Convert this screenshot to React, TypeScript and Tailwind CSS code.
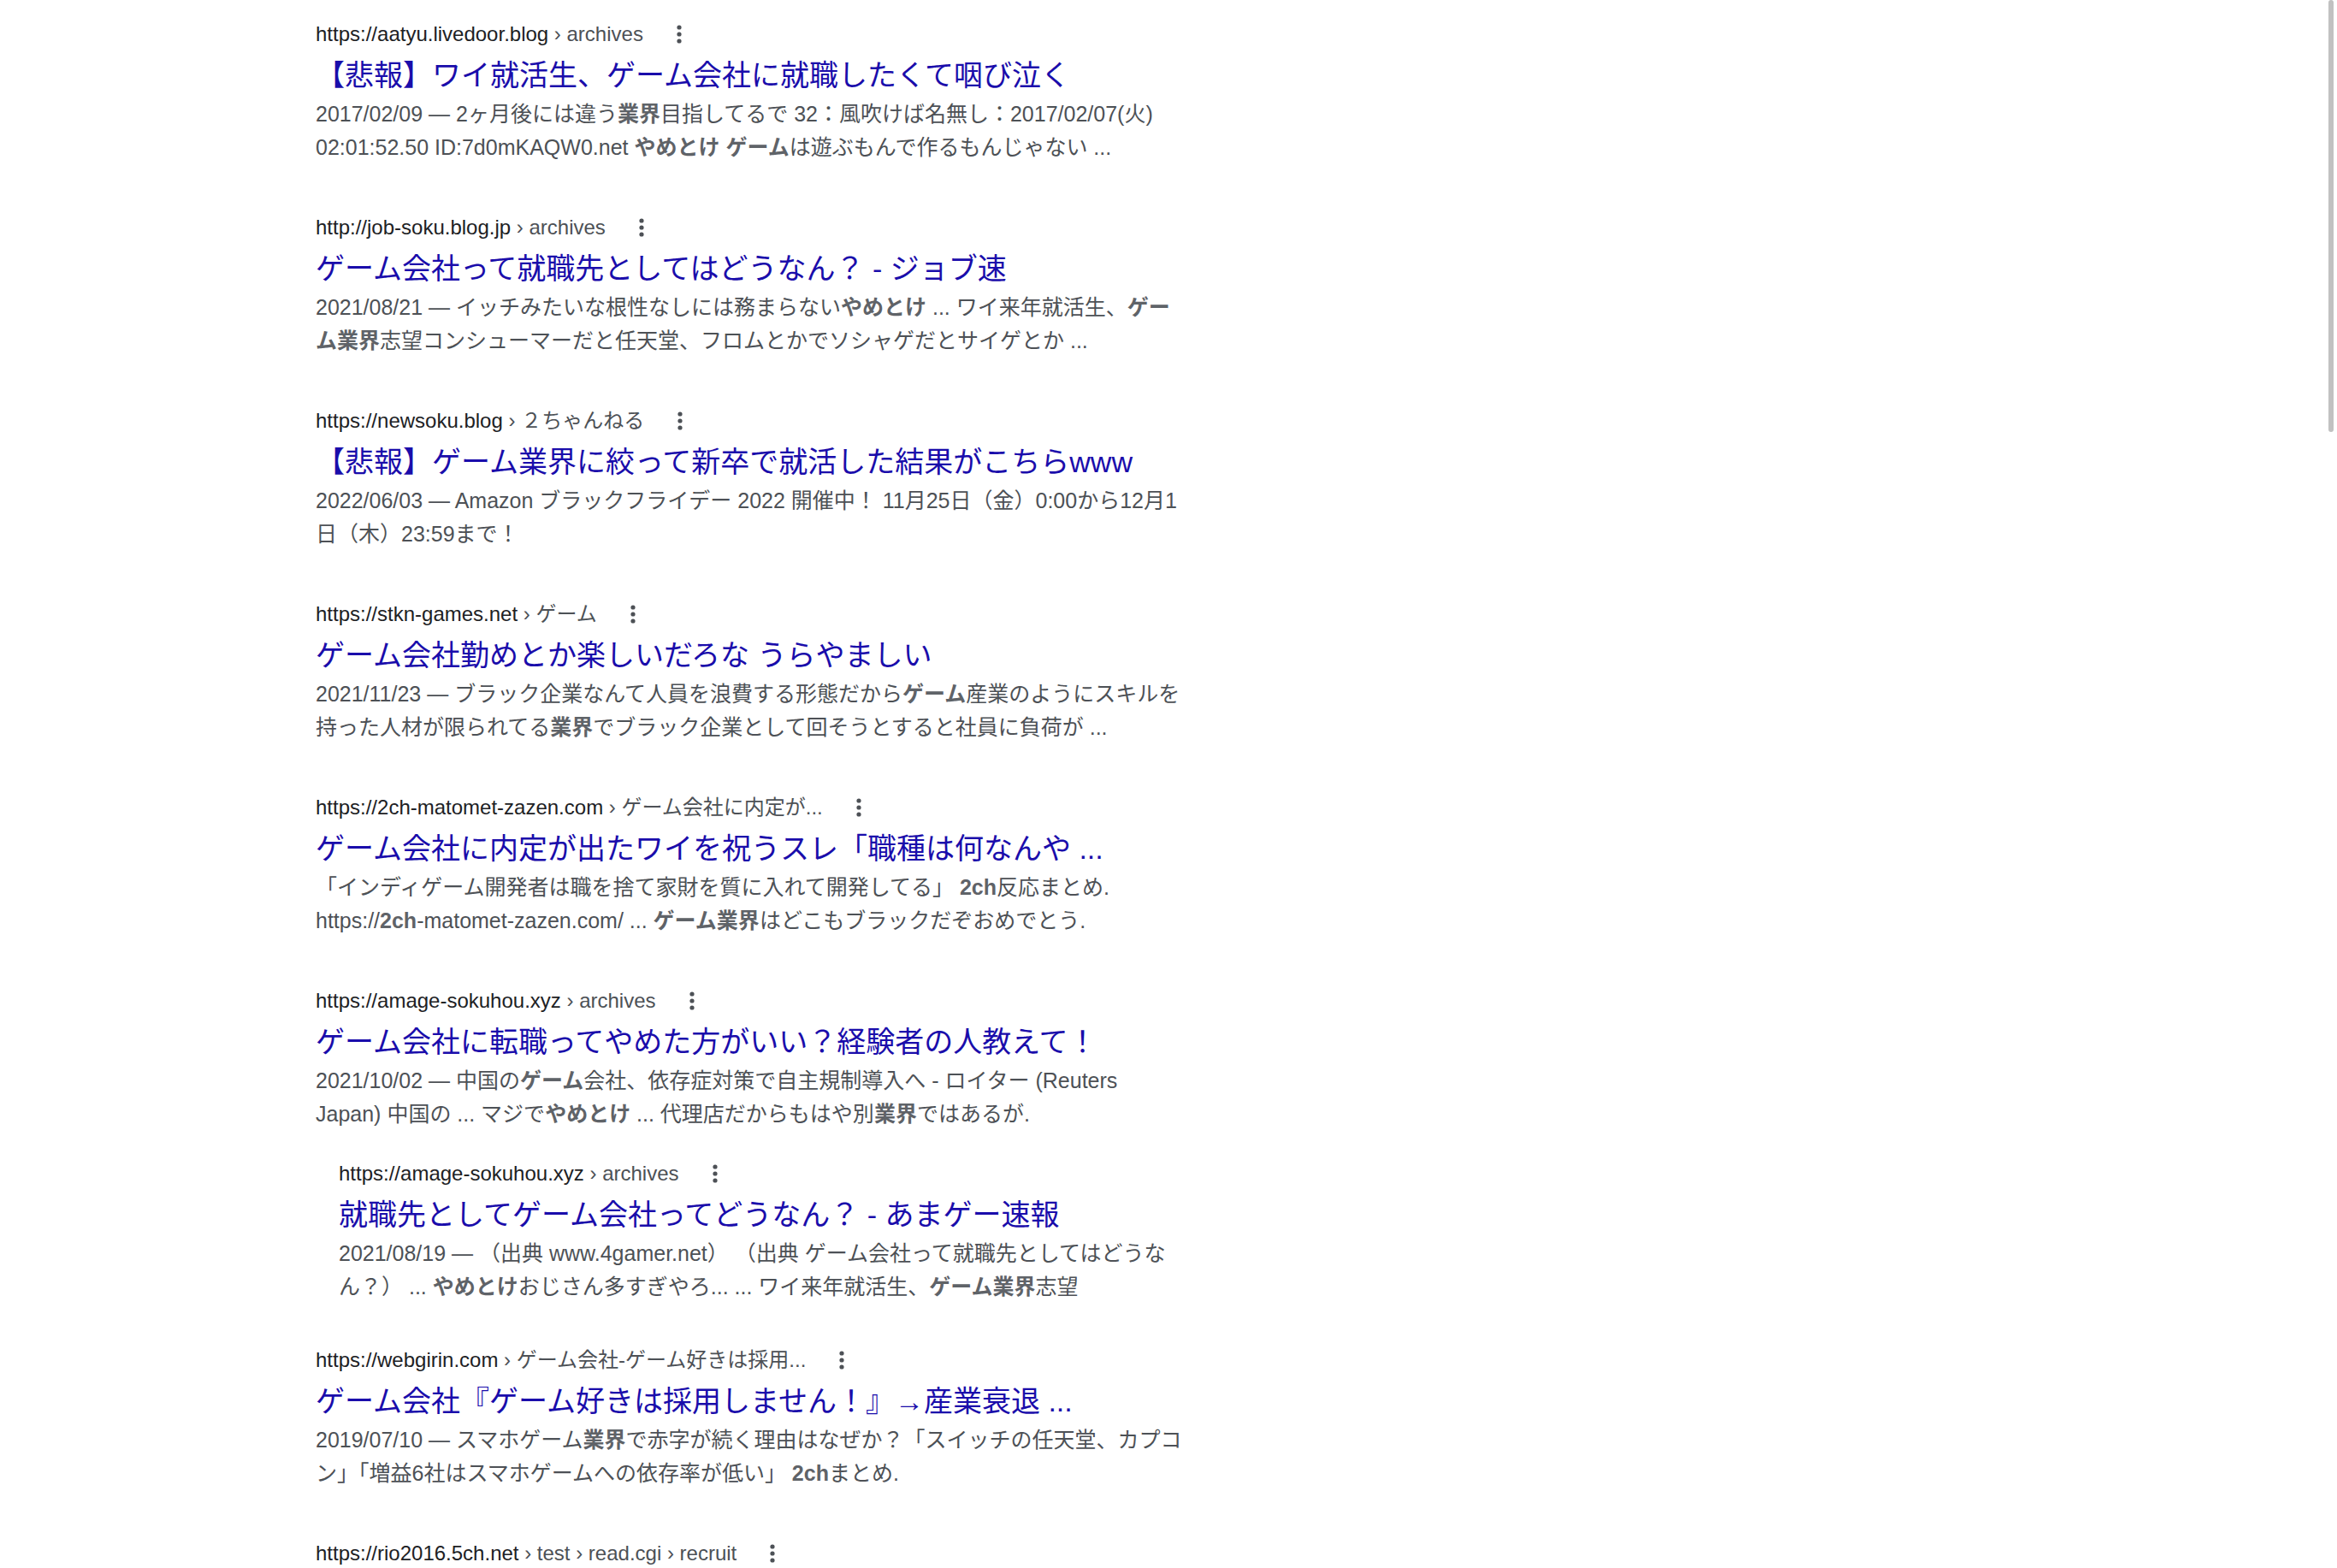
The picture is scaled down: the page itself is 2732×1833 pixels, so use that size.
import React from "react";

type Seg = string | { b: string };
type R = { url: string; crumb: string; title: string; snip: Seg[]; indent?: boolean; mt?: string };

const results: R[] = [
  { url: "https://aatyu.livedoor.blog", crumb: " › archives", title: "【悲報】ワイ就活生、ゲーム会社に就職したくて咽び泣く",
    snip: ["2017/02/09 — 2ヶ月後には違う", { b: "業界" }, "目指してるで 32：風吹けば名無し：2017/02/07(火) 02:01:52.50 ID:7d0mKAQW0.net ", { b: "やめとけ ゲーム" }, "は遊ぶもんで作るもんじゃない ..."] },
  { url: "http://job-soku.blog.jp", crumb: " › archives", title: "ゲーム会社って就職先としてはどうなん？ - ジョブ速",
    snip: ["2021/08/21 — イッチみたいな根性なしには務まらない", { b: "やめとけ" }, " ... ワイ来年就活生、", { b: "ゲーム業界" }, "志望コンシューマーだと任天堂、フロムとかでソシャゲだとサイゲとか ..."] },
  { url: "https://newsoku.blog", crumb: " › ２ちゃんねる", title: "【悲報】ゲーム業界に絞って新卒で就活した結果がこちらwww",
    snip: ["2022/06/03 — Amazon ブラックフライデー 2022 開催中！ 11月25日（金）0:00から12月1日（木）23:59まで！"] },
  { url: "https://stkn-games.net", crumb: " › ゲーム", title: "ゲーム会社勤めとか楽しいだろな うらやましい",
    snip: ["2021/11/23 — ブラック企業なんて人員を浪費する形態だから", { b: "ゲーム" }, "産業のようにスキルを持った人材が限られてる", { b: "業界" }, "でブラック企業として回そうとすると社員に負荷が ..."] },
  { url: "https://2ch-matomet-zazen.com", crumb: " › ゲーム会社に内定が...", title: "ゲーム会社に内定が出たワイを祝うスレ「職種は何なんや ...",
    snip: ["「インディゲーム開発者は職を捨て家財を質に入れて開発してる」 ", { b: "2ch" }, "反応まとめ. https://", { b: "2ch" }, "-matomet-zazen.com/ ... ", { b: "ゲーム業界" }, "はどこもブラックだぞおめでとう."] },
  { url: "https://amage-sokuhou.xyz", crumb: " › archives", title: "ゲーム会社に転職ってやめた方がいい？経験者の人教えて！",
    snip: ["2021/10/02 — 中国の", { b: "ゲーム" }, "会社、依存症対策で自主規制導入へ - ロイター (Reuters Japan) 中国の ... マジで", { b: "やめとけ" }, " ... 代理店だからもはや別", { b: "業界" }, "ではあるが."] },
  { url: "https://amage-sokuhou.xyz", crumb: " › archives", title: "就職先としてゲーム会社ってどうなん？ - あまゲー速報", indent: true, mt: "mt-[28px]",
    snip: ["2021/08/19 — （出典 www.4gamer.net） （出典 ゲーム会社って就職先としてはどうなん？） ... ", { b: "やめとけ" }, "おじさん多すぎやろ... ... ワイ来年就活生、", { b: "ゲーム業界" }, "志望"] },
  { url: "https://webgirin.com", crumb: " › ゲーム会社-ゲーム好きは採用...", title: "ゲーム会社『ゲーム好きは採用しません！』→産業衰退 ...", mt: "mt-[44px]",
    snip: ["2019/07/10 — スマホゲーム", { b: "業界" }, "で赤字が続く理由はなぜか？「スイッチの任天堂、カプコン」「増益6社はスマホゲームへの依存率が低い」 ", { b: "2ch" }, "まとめ."] },
  { url: "https://rio2016.5ch.net", crumb: " › test › read.cgi › recruit", title: "【22卒】ゲーム業界就活スレ【コロナ】 - 5ちゃんねる",
    snip: [] },
];

function Dots() {
  return (
    <svg width="8" height="24" viewBox="0 0 8 24" className="ml-[38px]">
      <circle cx="4" cy="4" r="2.6" fill="#4d5156" />
      <circle cx="4" cy="12" r="2.6" fill="#4d5156" />
      <circle cx="4" cy="20" r="2.6" fill="#4d5156" />
    </svg>
  );
}

export default function App() {
  return (
    <div className="relative h-[1833px] w-[2732px] overflow-hidden bg-white" style={{ fontFamily: '"Liberation Sans", Arial, "Noto Sans CJK JP", sans-serif' }}>
      <div className="absolute right-[4px] top-0 h-[505px] w-[6px] rounded-full bg-[#c1c1c1]" />
      <div className="flex w-[1400px] flex-col pl-[369px] pt-[18px]">
        {results.map((r, i) => (
          <div key={i} className={`${i === 0 ? "" : r.mt ?? "mt-[52px]"} ${r.indent ? "pl-[27px]" : ""} w-[1030px]`}>
            <div className="flex h-[44px] items-center text-[24px]">
              <span className="text-[#202124]">{r.url}</span>
              <span className="whitespace-pre text-[#4d5156]">{r.crumb}</span>
              <Dots />
            </div>
            <div className="flex h-[52px] items-center whitespace-nowrap text-[34px] text-[#1a0dab]">{r.title}</div>
            {r.snip.length > 0 && (
              <div className={`text-[25px] leading-[39px] text-[#4d5156] ${r.indent ? "w-[1003px]" : "w-[1020px]"}`}>
                {r.snip.map((s, j) => typeof s === "string" ? <span key={j}>{s}</span> : <b key={j} className="font-bold text-[#5f6368]">{s.b}</b>)}
              </div>
            )}
          </div>
        ))}
      </div>
    </div>
  );
}
